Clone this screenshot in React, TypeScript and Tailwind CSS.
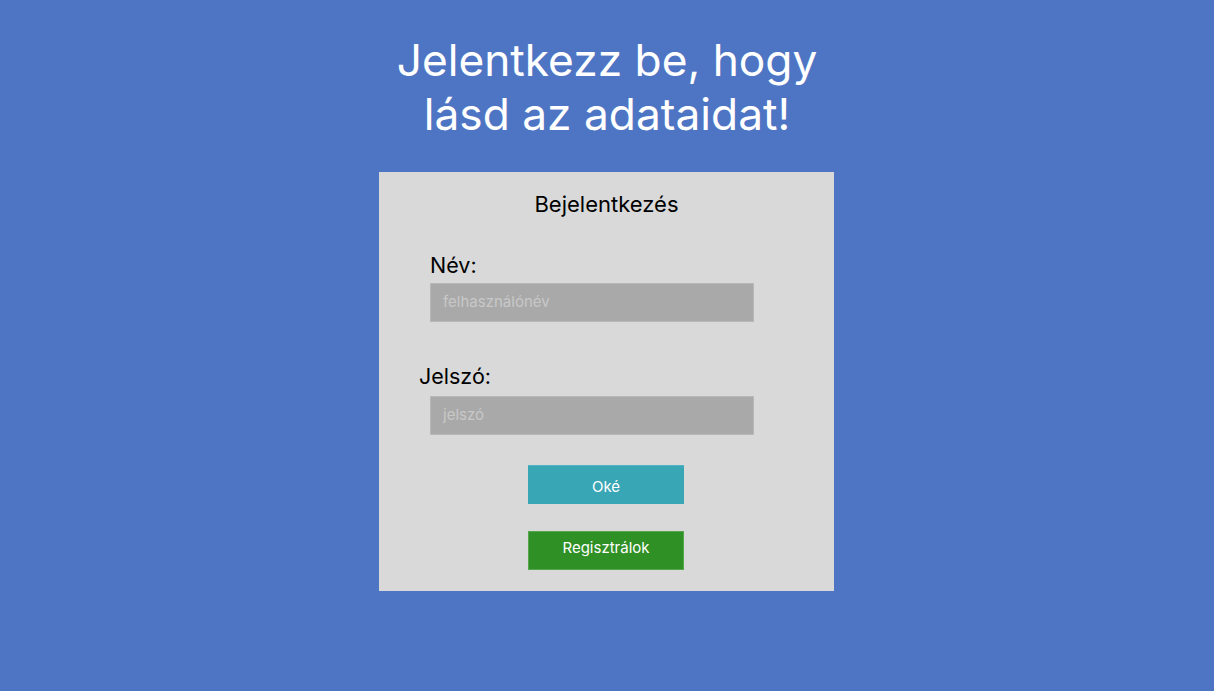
import React from "react";

export default function App() {
  return (
    <div
      className="min-h-screen w-full bg-[#4e75c4] flex flex-col items-center pt-[33px]"
      style={{ fontFamily: "Inter, 'Noto Sans', sans-serif" }}
    >
      <h1 className="text-white text-[44.25px] leading-[54px] text-center font-normal">
        Jelentkezz be, hogy
        <br />
        lásd az adataidat!
      </h1>
      <div className="mt-[31px] mr-[1px] w-[455px] h-[419px] bg-[#d9d9d9] flex flex-col pt-[18px]">
        <div className="text-center text-[22px] leading-[28px] text-black">Bejelentkezés</div>
        <div className="mt-[34px] pl-[51px] text-[21.5px] leading-[26px] text-black">Név:</div>
        <div className="mt-[5px] ml-[51px] w-[324px] h-[39px] bg-[#a9a9a9] border border-[#b8b8b8] flex items-center pl-[12px] text-[15px] text-[#c8c8c8]">
          felhasználónév
        </div>
        <div className="mt-[41px] pl-[40px] text-[21.5px] leading-[26px] text-black">Jelszó:</div>
        <div className="mt-[7px] ml-[51px] w-[324px] h-[39px] bg-[#a9a9a9] border border-[#b8b8b8] flex items-center pl-[12px] text-[15px] text-[#c8c8c8]">
          jelszó
        </div>
        <div className="mt-[30px] flex justify-center">
          <div className="mr-[1px] w-[156px] h-[39px] bg-[#39a6b6] border-t border-[#4fb3c1] flex items-center justify-center pt-[5px] text-white text-[15px]">
            Oké
          </div>
        </div>
        <div className="mt-[27px] flex justify-center">
          <div className="mr-[1px] w-[156px] h-[39px] bg-[#2f9025] border border-[#56a64d] flex items-center justify-center pb-[5px] text-white text-[15px]">
            Regisztrálok
          </div>
        </div>
      </div>
    </div>
  );
}
